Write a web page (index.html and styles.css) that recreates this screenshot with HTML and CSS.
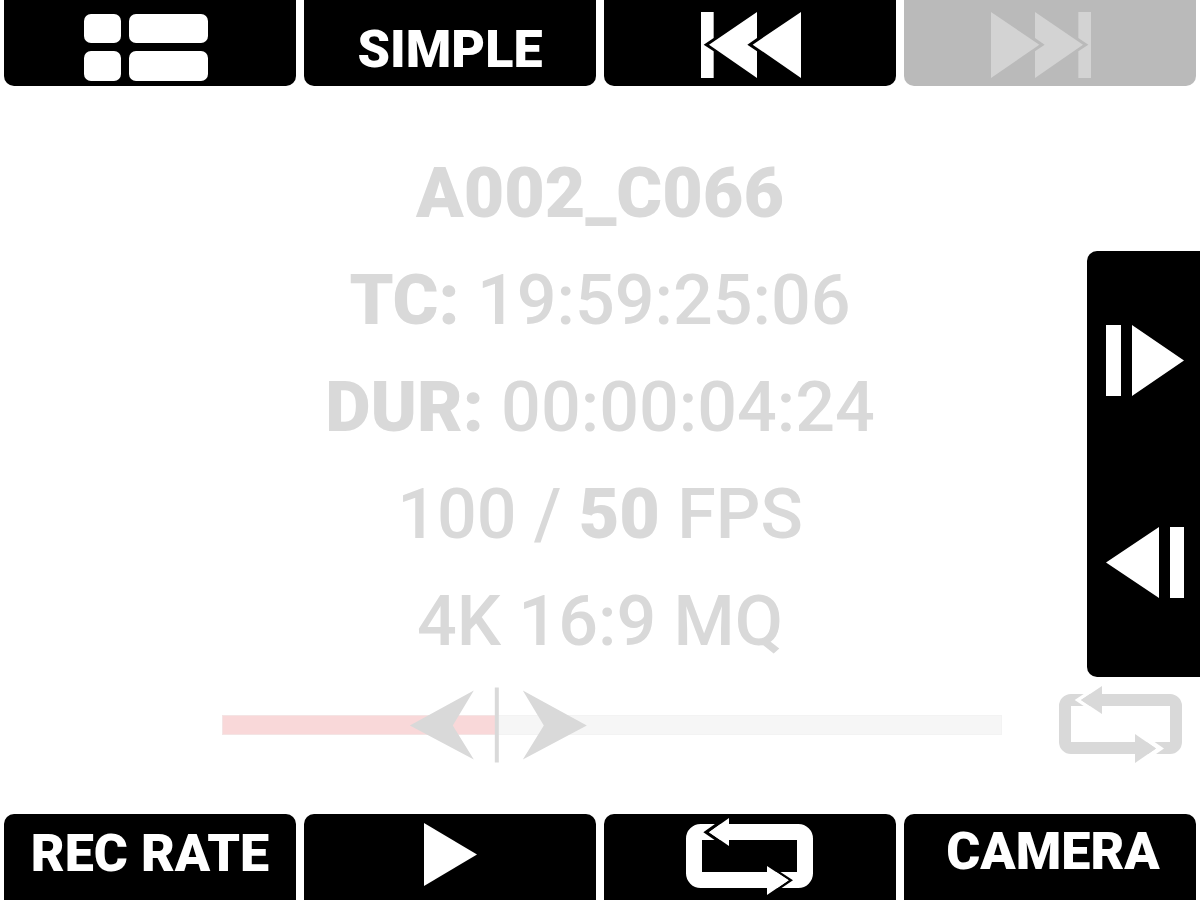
FILE: index.html
```html
<!DOCTYPE html>
<html lang="en">
<head>
<meta charset="utf-8">
<title>Clip playback</title>
<link rel="stylesheet" href="styles.css">
</head>
<body>
<header class="bar bar-top">
  <button class="key key-list" type="button" aria-label="Clip list">
    <svg width="124" height="67" viewBox="0 0 124 67" fill="currentColor"><rect width="37" height="29" rx="7"/><rect x="45" width="79" height="29" rx="7"/><rect y="37" width="37" height="30" rx="7"/><rect x="45" y="37" width="79" height="30" rx="7"/></svg>
  </button>
  <button class="key key-simple" type="button">SIMPLE</button>
  <button class="key key-skip key-previous" type="button" aria-label="Previous clip">
    <svg width="100" height="66" viewBox="0 0 300 198" fill="currentColor"><path d="M0 0H38V78L8 98L38 118V198H0ZM24 98L168 0V78L139 98L168 118V198ZM155 98L300 0V198Z"/></svg>
  </button>
  <button class="key key-skip key-next" type="button" aria-label="Next clip" disabled>
    <svg width="100" height="66" viewBox="0 0 300 198" fill="currentColor"><path d="M300 0H262V78L292 98L262 118V198H300ZM276 98L132 0V78L161 98L132 118V198ZM145 98L0 0V198Z"/></svg>
  </button>
</header>

<main class="screen">
  <section class="info">
    <h1 class="line name">A002_C066</h1>
    <p class="line"><b>TC:</b> 19:59:25:06</p>
    <p class="line"><b>DUR:</b> 00:00:04:24</p>
    <p class="line">100 / <b>50</b> FPS</p>
    <p class="line">4K 16:9 MQ</p>
  </section>
  <nav class="steps">
    <button class="step" type="button" aria-label="Step forward">
      <svg width="78" height="71" viewBox="0 0 78 71" fill="currentColor"><path d="M0 0H15V71H0ZM26 0L78 35.500L26 71Z"/></svg>
    </button>
    <button class="step" type="button" aria-label="Step back">
      <svg width="78" height="71" viewBox="0 0 78 71" fill="currentColor"><path d="M64 0H78V71H64ZM53 0L0 35.500L53 71Z"/></svg>
    </button>
  </nav>
  <section class="timeline">
    <input class="scrub" type="range" min="0" max="1000" value="312" aria-label="Playback position">
    <svg class="loop" width="123" height="77" viewBox="57 48 369 231" role="img" aria-label="Loop on">
      <path fill="currentColor" fill-rule="evenodd" d="M93 72H390A36 36 0 0 1 426 108V216A36 36 0 0 1 390 252H93A36 36 0 0 1 57 216V108A36 36 0 0 1 93 72ZM93 108V216H390V108Z"/>
      <path fill="#fff" d="M104 90L167 48H186L123 90L186 132H167ZM372 235.500L309 192H285L348 235.500L285 279H309Z"/>
      <path fill="currentColor" d="M123 90L186 48V132ZM348 235.500L285 192V279Z"/>
    </svg>
  </section>
</main>

<footer class="bar bar-bottom">
  <button class="key key-rate" type="button">REC RATE</button>
  <button class="key key-play" type="button" aria-label="Play">
    <svg width="53" height="63" viewBox="0 0 53 63" fill="currentColor"><path d="M0 0L53 31.500L0 63Z"/></svg>
  </button>
  <button class="key key-loop" type="button" aria-label="Loop">
    <svg width="127" height="77" viewBox="258 54 381 231">
      <path fill="currentColor" fill-rule="evenodd" d="M302 72H595A44 44 0 0 1 639 116V220A44 44 0 0 1 595 264H302A44 44 0 0 1 258 220V116A44 44 0 0 1 302 72ZM306 120V216H591V120Z"/>
      <path fill="#000" d="M310 97L370 54H387L327 97L387 138H370ZM579 241L514 198H501L566 241L501 285H514Z"/>
      <path fill="currentColor" d="M327 97L387 54V138ZM566 241L501 198V285Z"/>
    </svg>
  </button>
  <button class="key key-camera" type="button">CAMERA</button>
</footer>
</body>
</html>
```

FILE: styles.css
```css
* {
  box-sizing: border-box;
}

body {
  margin: 0;
  min-height: 100vh;
  display: flex;
  flex-direction: column;
  background: #fff;
  font-family: Roboto, "Liberation Sans", sans-serif;
}

svg {
  display: block;
  flex: none;
}

.bar {
  display: grid;
  grid-template-columns: repeat(4, 1fr);
  gap: 8px;
  padding: 0 4px;
}

.key {
  display: flex;
  align-items: center;
  justify-content: center;
  height: 86px;
  padding: 0;
  border: 0;
  background: #000;
  color: #fff;
  font: 900 52px/64px Roboto, "Liberation Sans", sans-serif;
  white-space: nowrap;
}

.bar-top .key {
  border-radius: 0 0 10px 10px;
}

.bar-bottom .key {
  border-radius: 10px 10px 0 0;
}

.key-list {
  padding: 8px 8px 0 0;
}

.key-simple {
  padding-top: 14px;
}

.key-skip {
  padding-top: 4px;
}

.key-previous {
  padding-left: 2px;
}

.key-next {
  padding-right: 18px;
}

.key:disabled {
  background: #bababa;
  color: #d3d3d3;
}

.key-rate,
.key-play {
  padding-bottom: 6px;
}

.key-loop {
  padding: 0 2px 2px 0;
}

.key-camera {
  padding: 0 0 10px 6px;
}

.screen {
  flex: 1;
  display: grid;
  grid-template-columns: 113px 1fr 113px;
  align-content: start;
  color: #d9d9d9;
}

.info {
  grid-column: 2;
  padding: 54px 0 4px;
  text-align: center;
}

.line {
  margin: 0;
  font-size: 70px;
  font-weight: 500;
  line-height: 107px;
  white-space: nowrap;
}

.line b,
.name {
  font-weight: 900;
}

.steps {
  grid-column: 3;
  align-self: end;
  display: flex;
  flex-direction: column;
  margin-bottom: 2px;
  padding: 8px 0 14px;
  border-radius: 10px 0 0 10px;
  background: #000;
}

.step {
  display: flex;
  align-items: center;
  justify-content: center;
  height: 202px;
  padding: 0 0 0 3px;
  border: 0;
  background: transparent;
  color: #fff;
}

.timeline {
  grid-column: 1 / -1;
  display: flex;
  align-items: center;
  gap: 57px;
  padding: 7px 18px 0 222px;
}

.scrub {
  flex: 1;
  min-width: 0;
  height: 77px;
  margin: 0;
  appearance: none;
  background: transparent;
}

.scrub::-webkit-slider-runnable-track {
  height: 20px;
  background: linear-gradient(to right, #f9d8d9 35%, #f6f6f6 35%);
  box-shadow: inset 0 0 0 1px #f0f0f080;
}

.scrub::-webkit-slider-thumb {
  appearance: none;
  width: 178px;
  height: 76px;
  margin-top: -28px;
  border: 0;
  background: #d9d9d9;
  clip-path: path("M0 39L64 4L43 39L64 73ZM85 1H89V76H85ZM177 39L113 4L134 39L113 73Z");
}
```
